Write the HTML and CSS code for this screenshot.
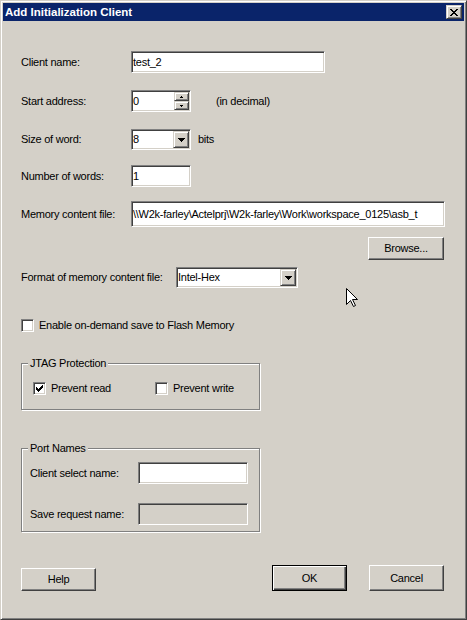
FILE: index.html
```html
<!DOCTYPE html>
<html lang="en">
<head>
    <meta charset="UTF-8">
    <title>Add Initialization Client</title>
    <link rel="stylesheet" href="styles.css">
</head>
<body>

<div class="window">
    <div class="titlebar">
        <span class="title">Add Initialization Client</span>
        <div class="close-btn">
            <svg width="8" height="7" viewBox="0 0 8 7" shape-rendering="crispEdges">
                <path d="M0 0h2v1h-2zM6 0h2v1h-2zM1 1h2v1h-2zM5 1h2v1h-2zM2 2h4v1h-4zM3 3h2v1h-2zM2 4h4v1h-4zM1 5h2v1h-2zM5 5h2v1h-2zM0 6h2v1h-2zM6 6h2v1h-2z" fill="#000"/>
            </svg>
        </div>
    </div>

    <div class="content">
        <div class="row row-client">
            <span class="lbl">Client name:</span>
            <div class="field f-name">test_2</div>
        </div>

        <div class="row row-start">
            <span class="lbl">Start address:</span>
            <div class="field f-small spinner">
                <span class="val">0</span>
                <div class="spin">
                    <div class="spin-btn">
                        <svg width="3" height="2" viewBox="0 0 3 2" shape-rendering="crispEdges"><path d="M1 0h1v1h-1zM0 1h3v1h-3z" fill="#000"/></svg>
                    </div>
                    <div class="spin-btn">
                        <svg width="3" height="2" viewBox="0 0 3 2" shape-rendering="crispEdges"><path d="M0 0h3v1h-3zM1 1h1v1h-1z" fill="#000"/></svg>
                    </div>
                </div>
            </div>
            <span class="note">(in decimal)</span>
        </div>

        <div class="row row-size">
            <span class="lbl">Size of word:</span>
            <div class="field f-small combo">
                <span class="val">8</span>
                <div class="drop-btn">
                    <svg width="7" height="4" viewBox="0 0 7 4" shape-rendering="crispEdges"><path d="M0 0h7v1h-7zM1 1h5v1h-5zM2 2h3v1h-3zM3 3h1v1h-1z" fill="#000"/></svg>
                </div>
            </div>
            <span class="unit">bits</span>
        </div>

        <div class="row row-number">
            <span class="lbl">Number of words:</span>
            <div class="field f-small">1</div>
        </div>

        <div class="row row-memory">
            <span class="lbl">Memory content file:</span>
            <div class="field f-path">\\W2k-farley\Actelprj\W2k-farley\Work\workspace_0125\asb_t</div>
        </div>

        <div class="row row-browse">
            <div class="btn btn-browse">Browse...</div>
        </div>

        <div class="row row-format">
            <span class="lbl lbl-wide">Format of memory content file:</span>
            <div class="field f-format combo">
                <span class="val">Intel-Hex</span>
                <div class="drop-btn">
                    <svg width="7" height="4" viewBox="0 0 7 4" shape-rendering="crispEdges"><path d="M0 0h7v1h-7zM1 1h5v1h-5zM2 2h3v1h-3zM3 3h1v1h-1z" fill="#000"/></svg>
                </div>
            </div>
        </div>

        <div class="row row-flash">
            <span class="check"></span>
            <span class="check-text">Enable on-demand save to Flash Memory</span>
        </div>

        <div class="group group-jtag">
            <span class="group-title">JTAG Protection</span>
            <div class="row">
                <div class="check-item">
                    <span class="check">
                        <svg width="7" height="7" viewBox="0 0 7 7" shape-rendering="crispEdges"><path d="M6 0h1v1h-1zM5 1h2v1h-2zM0 2h1v1h-1zM4 2h3v1h-3zM0 3h2v1h-2zM3 3h3v1h-3zM0 4h5v1h-5zM1 5h3v1h-3zM2 6h1v1h-1z" fill="#000"/></svg>
                    </span>
                    <span class="check-text">Prevent read</span>
                </div>
                <div class="check-item">
                    <span class="check"></span>
                    <span class="check-text">Prevent write</span>
                </div>
            </div>
        </div>

        <div class="group group-ports">
            <span class="group-title">Port Names</span>
            <div class="row">
                <span class="lbl lbl-port">Client select name:</span>
                <div class="field f-port"></div>
            </div>
            <div class="row row-save">
                <span class="lbl lbl-port">Save request name:</span>
                <div class="field f-port disabled"></div>
            </div>
        </div>

        <div class="row row-buttons">
            <div class="btn btn-help">Help</div>
            <div class="btn btn-default">OK</div>
            <div class="btn btn-cancel">Cancel</div>
        </div>
    </div>

    <svg class="cursor" width="13" height="20" viewBox="0 0 13 20">
        <path d="M0.5 0.5V16.5L4.5 12.5L7.5 18.5L9.5 17.5L6.5 11.5H11.5Z" fill="#fff" stroke="#000" stroke-width="1"/>
    </svg>
</div>

</body>
</html>
```

FILE: styles.css
```css
body {
    margin: 0;
    background: #d4d0c8;
}

.window {
    position: relative;
    width: 467px;
    height: 620px;
    box-sizing: border-box;
    padding: 2px;
    background: #d4d0c8;
    border: 1px solid;
    border-color: #d4d0c8 #404040 #404040 #d4d0c8;
    box-shadow: inset 1px 1px #fff, inset -1px -1px #808080;
    font-family: "Liberation Sans", Arial, sans-serif;
    font-size: 11px;
    line-height: 13px;
    letter-spacing: -0.25px;
    color: #000;
}

/* title bar */
.titlebar {
    display: flex;
    align-items: center;
    height: 18px;
    padding: 0 2px;
    background: #0a246a;
    color: #fff;
    font-weight: bold;
    font-size: 11.5px;
    letter-spacing: 0;
}

.close-btn {
    margin-left: auto;
    width: 16px;
    height: 14px;
    box-sizing: border-box;
    display: flex;
    align-items: center;
    justify-content: center;
    background: #d4d0c8;
    border: 1px solid;
    border-color: #d4d0c8 #404040 #404040 #d4d0c8;
    box-shadow: inset 1px 1px #fff, inset -1px -1px #808080;
}

/* dialog body */
.content {
    padding: 0 19px 0 18px;
}

.row {
    display: flex;
    align-items: center;
}

.lbl {
    width: 110px;
    flex-shrink: 0;
    white-space: nowrap;
}
.lbl-wide { width: 155px; }
.lbl-port { width: 108px; }

.row-client { margin-top: 30px; }
.row-start { margin-top: 17px; }
.row-size { margin-top: 17px; }
.row-number { margin-top: 15px; }
.row-memory { margin-top: 14px; }
.row-browse { margin-top: 10px; justify-content: flex-end; padding-right: 1px; }
.row-format { margin-top: 7px; }
.row-flash { margin-top: 31px; }

/* sunken text fields */
.field {
    box-sizing: border-box;
    flex-shrink: 0;
    height: 22px;
    display: flex;
    align-items: center;
    padding: 0 1px;
    background: #fff;
    border: 1px solid;
    border-color: #808080 #fff #fff #808080;
    box-shadow: inset 1px 1px #404040, inset -1px -1px #d4d0c8;
    white-space: nowrap;
    overflow: hidden;
}
.field.disabled { background: #d4d0c8; }

.f-name { width: 194px; }
.f-small { width: 60px; }
.f-path { width: 314px; height: 26px; }
.f-format { width: 122px; }
.f-port { width: 110px; }

.val { flex: 1; }

.combo { height: 21px; padding-right: 1px; }
.spinner { padding-right: 1px; }

.drop-btn {
    width: 16px;
    height: 17px;
    box-sizing: border-box;
    display: flex;
    align-items: center;
    justify-content: center;
    background: #d4d0c8;
    border: 1px solid;
    border-color: #d4d0c8 #404040 #404040 #d4d0c8;
    box-shadow: inset 1px 1px #fff, inset -1px -1px #808080;
}

.spin {
    display: flex;
    flex-direction: column;
    width: 15px;
    height: 18px;
}

.spin-btn {
    height: 9px;
    box-sizing: border-box;
    display: flex;
    align-items: center;
    justify-content: center;
    background: #d4d0c8;
    border: 1px solid;
    border-color: #d4d0c8 #404040 #404040 #d4d0c8;
    box-shadow: inset 1px 1px #fff, inset -1px -1px #808080;
}

.note { margin-left: 25px; }
.unit { margin-left: 7px; }

/* checkboxes */
.check {
    width: 13px;
    height: 13px;
    box-sizing: border-box;
    flex-shrink: 0;
    display: flex;
    align-items: center;
    justify-content: center;
    background: #fff;
    border: 1px solid;
    border-color: #808080 #fff #fff #808080;
    box-shadow: inset 1px 1px #404040, inset -1px -1px #d4d0c8;
}

.check-text { margin-left: 5px; white-space: nowrap; }

.check-item {
    display: flex;
    align-items: center;
    flex-shrink: 0;
    width: 122px;
}

/* group boxes */
.group {
    position: relative;
    box-sizing: border-box;
    width: 239px;
    border: 1px solid #808080;
    box-shadow: inset 1px 1px #fff, 1px 1px #fff;
}

.group-title {
    position: absolute;
    top: -7px;
    left: 6px;
    padding: 0 2px;
    background: #d4d0c8;
    white-space: nowrap;
}

.group-jtag {
    margin-top: 31px;
    height: 47px;
    padding: 18px 0 0 11px;
}

.group-ports {
    margin-top: 38px;
    height: 84px;
    padding: 13px 0 0 8px;
}

.row-save { margin-top: 19px; }

/* push buttons */
.btn {
    box-sizing: border-box;
    flex-shrink: 0;
    width: 75px;
    height: 23px;
    display: flex;
    align-items: center;
    justify-content: center;
    background: #d4d0c8;
    border: 1px solid;
    border-color: #fff #404040 #404040 #fff;
    box-shadow: inset -1px -1px #808080;
}

.btn-browse { width: 76px; }

.row-buttons {
    margin-top: 33px;
    align-items: flex-end;
}

.btn-default {
    height: 26px;
    margin-left: auto;
    border-color: #000;
    box-shadow: inset 1px 1px #fff, inset -1px -1px #404040, inset -2px -2px #808080;
}

.btn-cancel {
    height: 26px;
    margin-left: 22px;
    margin-right: 1px;
}

.cursor {
    position: absolute;
    left: 345px;
    top: 287px;
}
```
